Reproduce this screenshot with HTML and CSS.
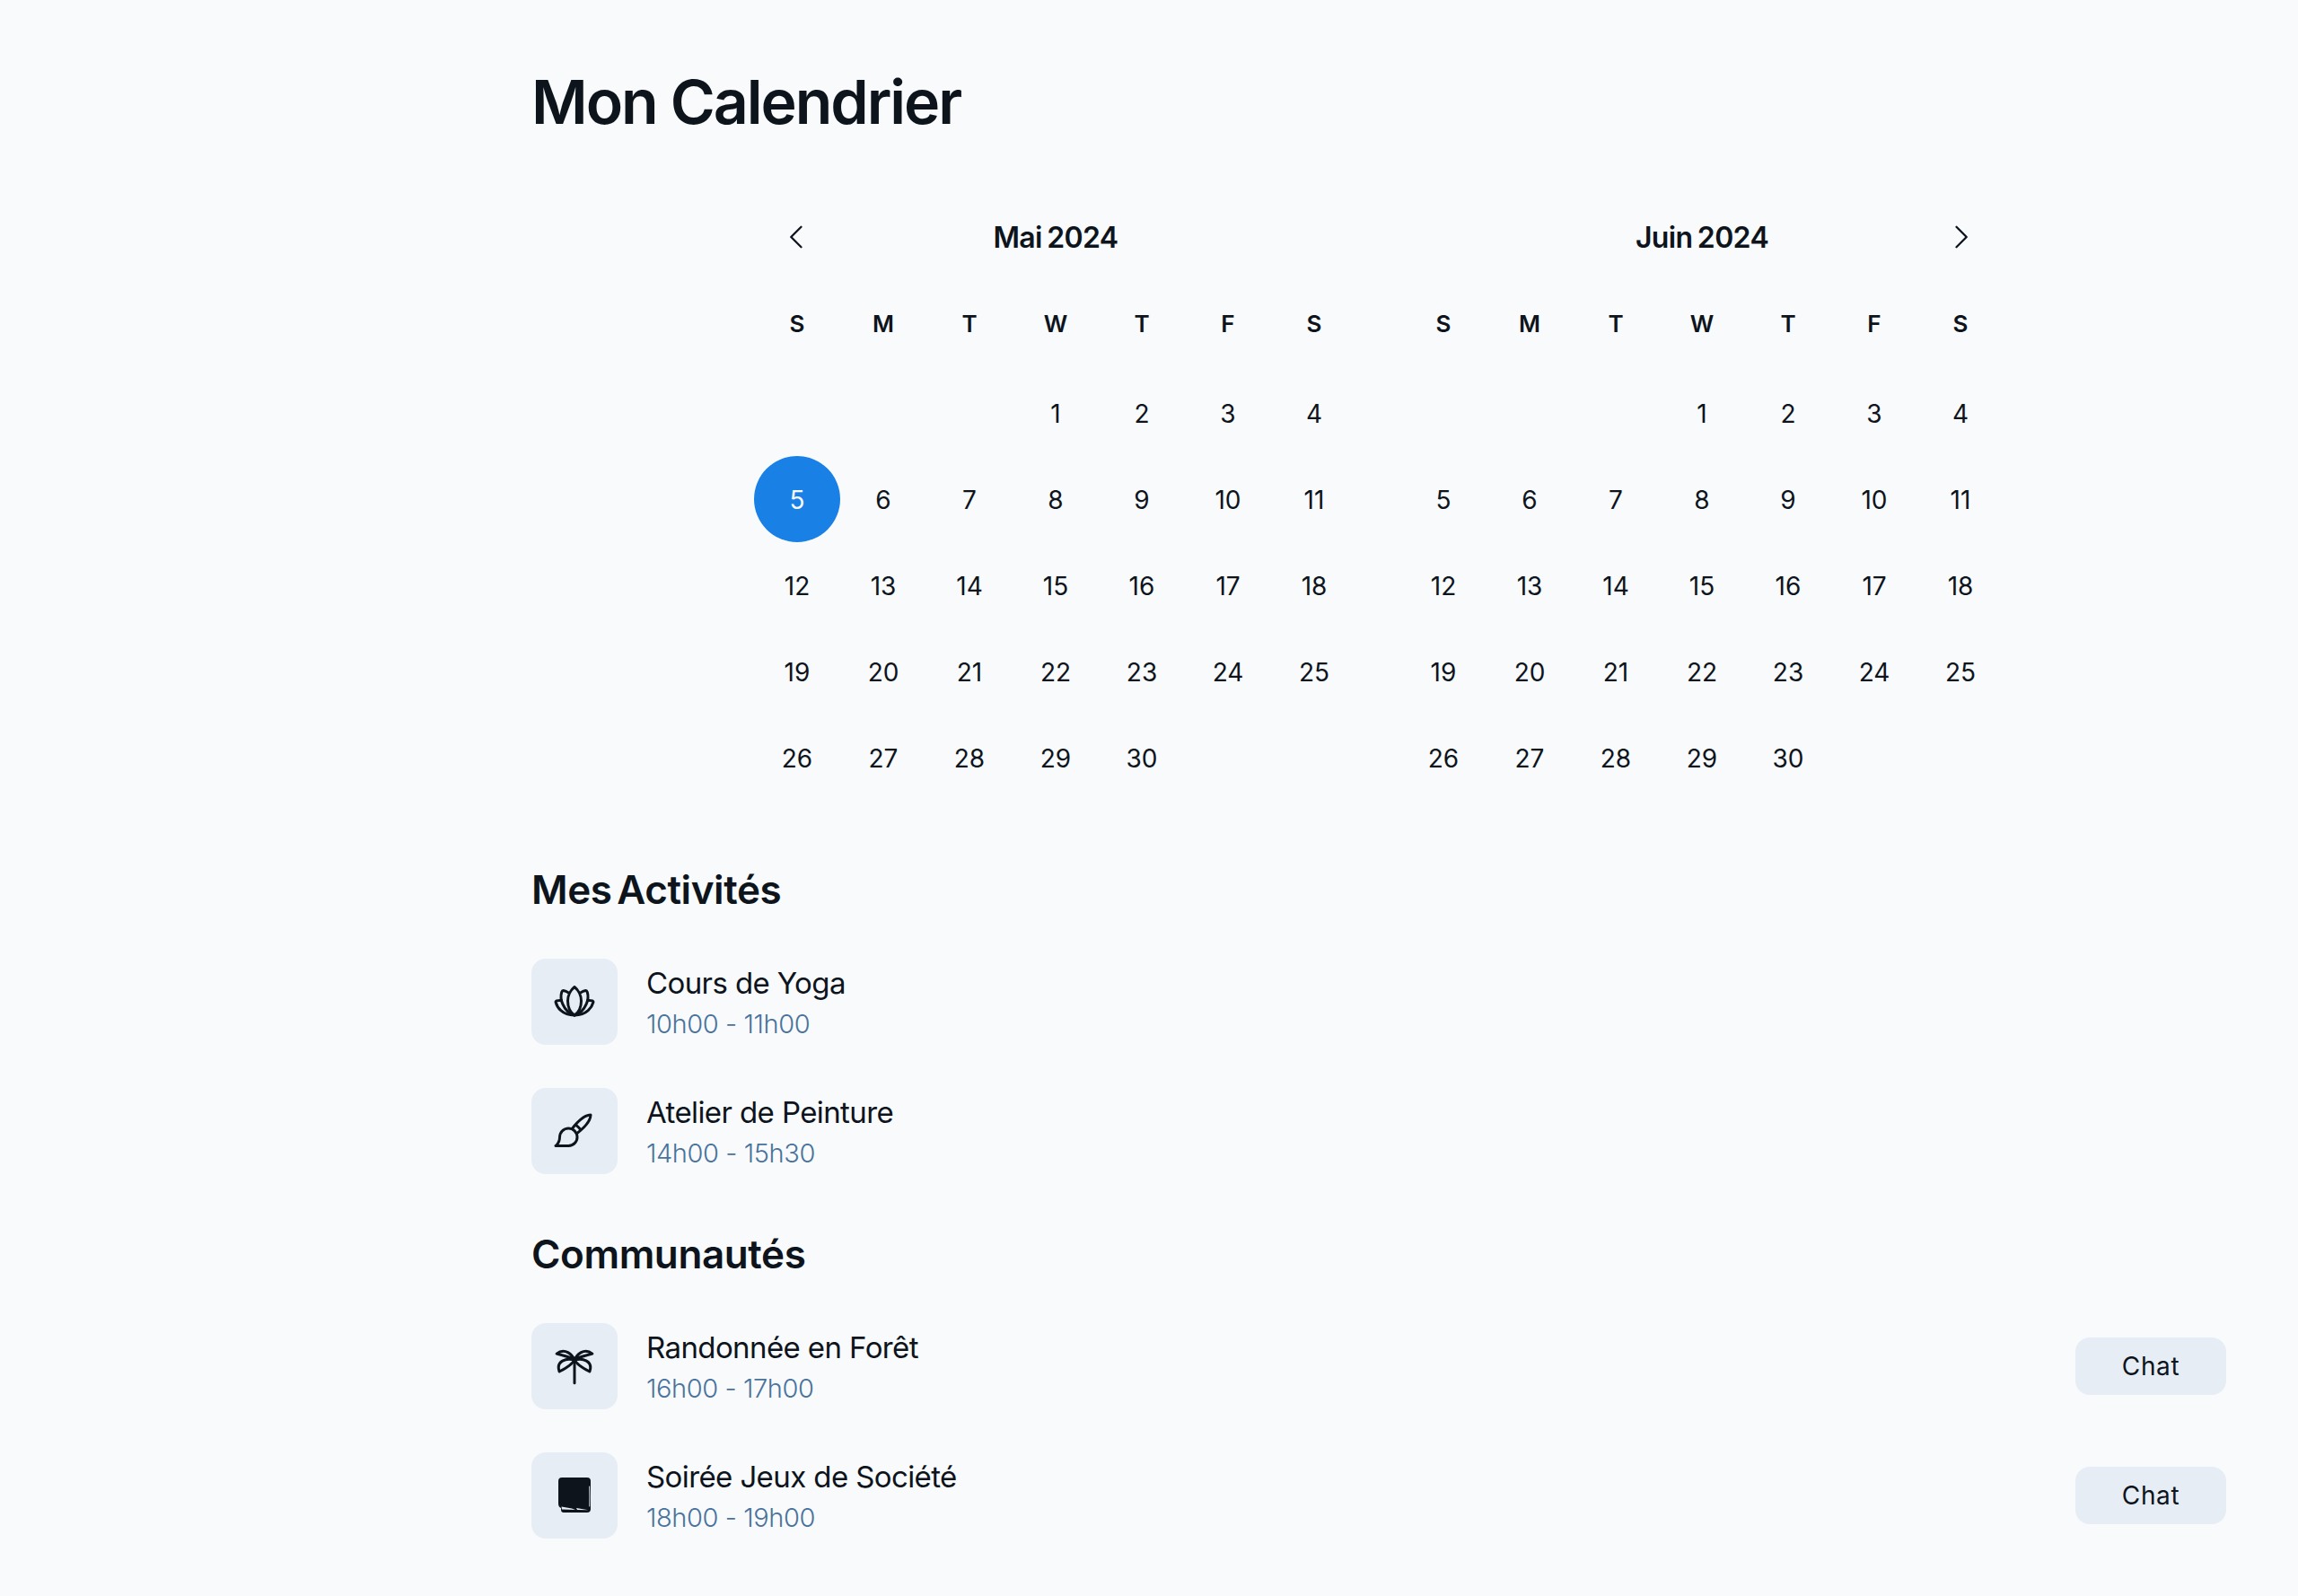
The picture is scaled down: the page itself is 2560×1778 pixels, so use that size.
FILE: index.html
```html
<!DOCTYPE html>
<html lang="fr">
  <head>
    <meta charset="UTF-8" />
    <meta name="viewport" content="width=device-width, initial-scale=1.0" />
    <title>Mon Calendrier</title>
    <link rel="stylesheet" href="styles.css">
  </head>
  <body>
    <main class="page">
      <h1 class="page-title">Mon Calendrier</h1>

      <!-- Two months side by side -->
      <section class="calendars">
        <div class="month">
          <div class="month-head">
            <svg class="caret" viewBox="0 0 256 256"><path d="M165.66,202.34a8,8,0,0,1-11.32,11.32l-80-80a8,8,0,0,1,0-11.32l80-80a8,8,0,0,1,11.32,11.32L91.31,128Z"/></svg>
            <h2 class="month-name">Mai 2024</h2>
          </div>
          <div class="days">
            <span class="weekday">S</span><span class="weekday">M</span><span class="weekday">T</span><span class="weekday">W</span><span class="weekday">T</span><span class="weekday">F</span><span class="weekday">S</span>
            <span class="day offset-3">1</span><span class="day">2</span><span class="day">3</span><span class="day">4</span>
            <span class="day selected">5</span><span class="day">6</span><span class="day">7</span><span class="day">8</span><span class="day">9</span><span class="day">10</span><span class="day">11</span>
            <span class="day">12</span><span class="day">13</span><span class="day">14</span><span class="day">15</span><span class="day">16</span><span class="day">17</span><span class="day">18</span>
            <span class="day">19</span><span class="day">20</span><span class="day">21</span><span class="day">22</span><span class="day">23</span><span class="day">24</span><span class="day">25</span>
            <span class="day">26</span><span class="day">27</span><span class="day">28</span><span class="day">29</span><span class="day">30</span>
          </div>
        </div>
        <div class="month">
          <div class="month-head">
            <h2 class="month-name">Juin 2024</h2>
            <svg class="caret caret-next" viewBox="0 0 256 256"><path d="M181.66,133.66l-80,80a8,8,0,0,1-11.32-11.32L164.69,128,90.34,53.66a8,8,0,0,1,11.32-11.32l80,80A8,8,0,0,1,181.66,133.66Z"/></svg>
          </div>
          <div class="days">
            <span class="weekday">S</span><span class="weekday">M</span><span class="weekday">T</span><span class="weekday">W</span><span class="weekday">T</span><span class="weekday">F</span><span class="weekday">S</span>
            <span class="day offset-3">1</span><span class="day">2</span><span class="day">3</span><span class="day">4</span>
            <span class="day">5</span><span class="day">6</span><span class="day">7</span><span class="day">8</span><span class="day">9</span><span class="day">10</span><span class="day">11</span>
            <span class="day">12</span><span class="day">13</span><span class="day">14</span><span class="day">15</span><span class="day">16</span><span class="day">17</span><span class="day">18</span>
            <span class="day">19</span><span class="day">20</span><span class="day">21</span><span class="day">22</span><span class="day">23</span><span class="day">24</span><span class="day">25</span>
            <span class="day">26</span><span class="day">27</span><span class="day">28</span><span class="day">29</span><span class="day">30</span>
          </div>
        </div>
      </section>

      <h2 class="section-title">Mes Activités</h2>
      <ul class="items">
        <li class="item">
          <div class="item-icon">
            <svg viewBox="0 0 256 256" class="stroke-icon">
              <path d="M128 208C102 190 88 156 88 122C88 88 108 56 128 40C148 56 168 88 168 122C168 156 154 190 128 208Z"/>
              <path d="M92 74C82 67 72 63 62 61C56 60 54 64 52 70C46 90 46 116 58 142C70 170 96 198 128 208C160 198 186 170 198 142C210 116 210 90 204 70C202 64 200 60 194 61C184 63 174 67 164 74"/>
              <path d="M50 120C40 119 30 120 22 122C17 124 15 128 17 132C24 158 52 208 128 208C204 208 232 158 239 132C241 128 239 124 234 122C226 120 216 119 206 120"/>
            </svg>
          </div>
          <div class="item-text">
            <p class="item-name">Cours de Yoga</p>
            <p class="item-time">10h00 - 11h00</p>
          </div>
        </li>
        <li class="item">
          <div class="item-icon">
            <svg viewBox="0 0 256 256" class="fill-icon"><path d="M232,32a8,8,0,0,0-8-8c-44.08,0-89.31,49.71-114.43,82.63A60,60,0,0,0,32,164c0,30.88-19.54,44.73-20.47,45.37A8,8,0,0,0,16,224H92a60,60,0,0,0,57.37-77.57C182.3,121.31,232,76.08,232,32ZM92,208H34.63C41.38,198.41,48,183.92,48,164a44,44,0,1,1,44,44Zm32.42-94.45q5.14-6.66,10.09-12.55A76.23,76.23,0,0,1,155,121.49q-5.9,4.94-12.55,10.09A60.54,60.54,0,0,0,124.42,113.55Zm42.7-2.68a92.57,92.57,0,0,0-22-22c31.78-34.53,55.75-45,69.9-47.91C212.17,55.12,201.65,79.09,167.12,110.87Z"/></svg>
          </div>
          <div class="item-text">
            <p class="item-name">Atelier de Peinture</p>
            <p class="item-time">14h00 - 15h30</p>
          </div>
        </li>
      </ul>

      <h2 class="section-title section-second">Communautés</h2>
      <ul class="items">
        <li class="item">
          <div class="item-icon">
            <svg viewBox="0 0 256 256" class="stroke-icon">
              <path d="M128 92V228"/>
              <path d="M128 92C116 60 70 14 22 54C60 66 96 68 128 92Z"/>
              <path d="M128 92C140 60 186 14 234 54C196 66 160 68 128 92Z"/>
              <path d="M128 92C80 78 16 96 38 160C70 144 108 125 128 92Z"/>
              <path d="M128 92C176 78 240 96 218 160C186 144 148 125 128 92Z"/>
            </svg>
          </div>
          <div class="item-text">
            <p class="item-name">Randonnée en Forêt</p>
            <p class="item-time">16h00 - 17h00</p>
          </div>
          <button class="chat-btn">Chat</button>
        </li>
        <li class="item">
          <div class="item-icon">
            <svg viewBox="0 0 48 48" class="book-icon">
              <path class="book-body" d="M10 4H38Q42 4 42 8V39Q42 43 38 43H12Q9 43 9 40V38Q6 37 6 33V8Q6 4 10 4Z"/>
              <path class="book-line" d="M9.5 36.5L21 38.5L25 40L10 39.5ZM26 38L38 40L39 40.2L27 40Z"/>
              <path class="book-edge" d="M40.6 14Q41 25 40.7 36"/>
            </svg>
          </div>
          <div class="item-text">
            <p class="item-name">Soirée Jeux de Société</p>
            <p class="item-time">18h00 - 19h00</p>
          </div>
          <button class="chat-btn">Chat</button>
        </li>
      </ul>
    </main>
  </body>
</html>
```

FILE: styles.css
```css
* {
  box-sizing: border-box;
}

html, body {
  margin: 0;
  background-color: #f8fafc;
}

body {
  font-family: 'Inter', sans-serif;
  color: #0d141c;
}

.page {
  padding: 73px 80px 64px 592px;
}

.page-title {
  margin: 0;
  font-size: 68px;
  line-height: 80px;
  font-weight: 600;
  letter-spacing: -0.03em;
}

/* Calendar */
.calendars {
  display: flex;
  justify-content: center;
  gap: 48px;
  margin-top: 63px;
}

.month {
  width: 672px;
}

.month-head {
  display: grid;
  grid-template-columns: 96px 1fr 96px;
  align-items: center;
  height: 96px;
}

.month-name {
  grid-column: 2;
  margin: 0;
  font-size: 32px;
  font-weight: 600;
  letter-spacing: -0.02em;
  word-spacing: -2px;
  text-align: center;
}

.caret {
  grid-column: 1;
  grid-row: 1;
  justify-self: center;
  width: 36px;
  height: 36px;
  fill: #0d141c;
}

.caret-next {
  grid-column: 3;
}

.days {
  display: grid;
  grid-template-columns: repeat(7, 96px);
  grid-template-rows: 100px;
  grid-auto-rows: 96px;
  font-size: 28px;
}

.weekday,
.day {
  display: flex;
  align-items: center;
  justify-content: center;
}

.weekday {
  height: 96px;
  font-size: 26px;
  font-weight: 600;
}

.day {
  padding-top: 2px;
  font-weight: 400;
}

.offset-3 {
  grid-column-start: 4;
}

.selected {
  border-radius: 50%;
  background-color: #1980e6;
  color: #f8fafc;
}

/* Activity and community lists */
.section-title {
  margin: 75px 0 0;
  font-size: 44px;
  line-height: 48px;
  font-weight: 600;
  letter-spacing: -0.4px;
  word-spacing: -5px;
}

.section-second {
  margin-top: 65px;
}

.items {
  display: flex;
  flex-direction: column;
  gap: 48px;
  margin: 53px 0 0;
  padding: 0;
  list-style: none;
}

.item {
  display: flex;
  align-items: center;
  gap: 32px;
}

.item-icon {
  display: flex;
  align-items: center;
  justify-content: center;
  width: 96px;
  height: 96px;
  flex-shrink: 0;
  border-radius: 16px;
  background-color: #e7edf4;
}

.item-icon svg {
  width: 48px;
  height: 48px;
}

.stroke-icon {
  fill: none;
  stroke: #0d141c;
  stroke-width: 16;
  stroke-linecap: round;
  stroke-linejoin: round;
}

.fill-icon {
  fill: #0d141c;
}

.book-body {
  fill: #0d141c;
}

.book-line {
  fill: #e7edf4;
}

.book-edge {
  fill: none;
  stroke: #e7edf4;
  stroke-width: 0.9;
  stroke-linecap: round;
}

.item-text {
  flex-grow: 1;
  padding-top: 4px;
}

.item-name,
.item-time {
  margin: 0;
}

.item-name {
  font-size: 33px;
  line-height: 46px;
  font-weight: 400;
  letter-spacing: -0.6px;
}

.item-time {
  font-size: 29px;
  line-height: 46px;
  font-weight: 300;
  letter-spacing: -0.4px;
  color: #49739c;
}

.chat-btn {
  width: 168px;
  height: 64px;
  border: none;
  border-radius: 16px;
  background-color: #e7edf4;
  font-family: 'Inter', sans-serif;
  font-size: 28px;
  font-weight: 400;
  letter-spacing: 0.6px;
  color: #0d141c;
}
```
